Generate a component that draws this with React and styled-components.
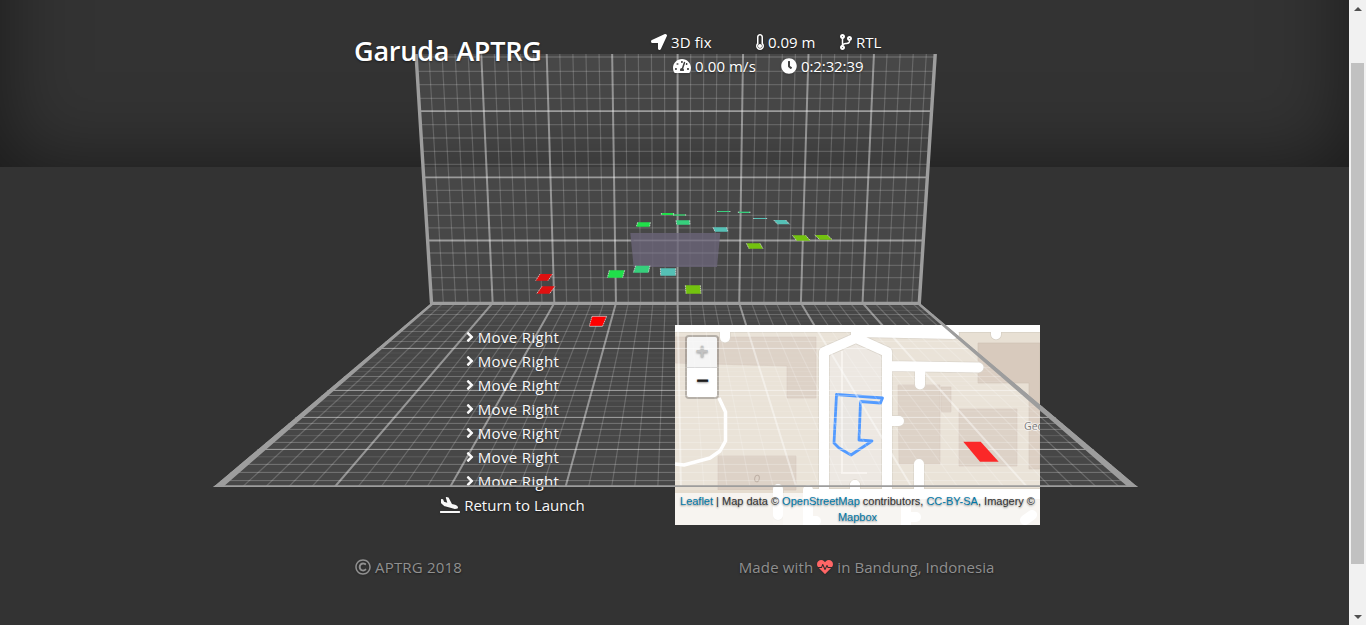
import React from 'react';
import styled, { createGlobalStyle } from 'styled-components';
import {
  FaLocationArrow, FaThermometerEmpty, FaCodeBranch, FaTachometerAlt, FaClock,
  FaAngleRight, FaPlaneArrival, FaRegCopyright, FaHeartbeat,
} from 'react-icons/fa';

const GlobalStyle = createGlobalStyle`
  * { box-sizing: border-box; }
  html, body { margin: 0; background: #333; }
  body {
    overflow: hidden;
    color: #fff;
    font: 15px/24px "Open Sans", "Noto Sans", sans-serif;
    text-shadow: 0 1px 2px rgba(0, 0, 0, 0.5);
  }
`;

const Window = styled.div`
  display: flex;
  width: 1366px;
  height: 625px;
  overflow: hidden;
`;

const Page = styled.main`
  position: relative;
  flex: 1;
  display: flex;
  flex-direction: column;
  background: #333;
`;

const Hero = styled.header`
  position: relative;
  height: 167px;
  padding: 30px 355px 0 354px;
  display: flex;
  justify-content: space-between;
  overflow: hidden;

  &::before {
    content: "";
    position: absolute;
    inset: -120px 0 0;
    box-shadow: inset 0 0 80px rgba(0, 0, 0, 0.5);
  }
`;

const Title = styled.h1`
  position: relative;
  z-index: 2;
  margin: 4px 0 0;
  font-size: 27px;
  line-height: 34px;
  font-weight: 600;
  letter-spacing: -0.2px;
  white-space: nowrap;
`;

const Status = styled.div`
  position: relative;
  z-index: 2;
  width: 232px;
  margin-right: 111px;
`;

const StatusRow = styled.div`
  display: flex;
  padding-left: ${(p) => p.$indent || 0}px;
  gap: ${(p) => p.$gap}px;
`;

const Item = styled.span`
  display: flex;
  align-items: center;
  gap: 4px;
  height: 24px;
  width: ${(p) => (p.$width ? `${p.$width}px` : 'auto')};
  letter-spacing: ${(p) => p.$spacing || 0}px;
  white-space: nowrap;
`;

const Glyph = styled.span`
  display: flex;
  justify-content: center;
  flex: none;
  width: ${(p) => p.$w || 16}px;
  color: ${(p) => p.$color || 'inherit'};
  filter: drop-shadow(0 1px 1px rgba(0, 0, 0, 0.2));

  svg {
    flex: none;
    width: ${(p) => Math.max(p.$w || 16, 16)}px;
    height: 16px;
  }
`;

const Panels = styled.section`
  display: grid;
  grid-template-columns: 365px 365px;
  margin: 158px 0 0 330px;
  height: 200px;
`;

const Commands = styled.div`
  display: flex;
  flex-direction: column;
  align-items: center;
  width: 345px;
  margin-left: 10px;
  color: #f8f8f8;
`;

const MapPanel = styled.div`
  position: relative;
  width: 365px;
  height: 200px;
  margin-left: -20px;
  overflow: hidden;
`;

const ZoomBar = styled.div`
  position: absolute;
  top: 10px;
  left: 10px;
  width: 34px;
  border: 2px solid rgba(0, 0, 0, 0.25);
  border-radius: 4px;
  background-clip: padding-box;
  overflow: hidden;
`;

const ZoomButton = styled.button`
  display: grid;
  place-items: center;
  width: 30px;
  height: ${(p) => (p.$off ? 31 : 29)}px;
  padding: ${(p) => (p.$off ? '3px 0 0' : '1px 0 0 1px')};
  border: 0;
  border-bottom: ${(p) => (p.$off ? '1px solid #ccc' : '0')};
  background: ${(p) => (p.$off ? '#f4f4f4' : '#fff')};
  color: ${(p) => (p.$off ? '#bbb' : '#000')};
  font: bold 22px/28px "Liberation Mono", monospace;
  text-shadow: 0 1px 2px rgba(0, 0, 0, 0.4);
`;

const Attribution = styled.div`
  position: absolute;
  right: 0;
  bottom: 0;
  width: 365px;
  height: 32px;
  padding: 0 3px;
  background: rgba(255, 255, 255, 0.68);
  color: #333;
  font: 11px/16px "Liberation Sans", Arial, sans-serif;
  text-align: center;
  text-shadow: 0 1px 2px rgba(0, 0, 0, 0.45);
`;

const Link = styled.a`
  color: #0078a8;
`;

const Footer = styled.footer`
  display: flex;
  justify-content: space-between;
  margin: 30px 354.5px 0 355px;
  color: #909090;
`;

const SceneLayer = styled.svg`
  position: absolute;
  z-index: 1;
  top: 0;
  left: 0;
  pointer-events: none;
`;

const ScrollTrack = styled.div`
  width: 17px;
  background: #f1f1f1;
  display: flex;
  flex-direction: column;
  align-items: center;
  justify-content: space-between;
  padding: 7px 0 6px;
`;

const Arrow = styled.i`
  border: 4px solid transparent;
  border-top: ${(p) => (p.$up ? '0' : '4px solid #505050')};
  border-bottom: ${(p) => (p.$up ? '4px solid #505050' : '0')};
`;

const Thumb = styled.div`
  width: 13px;
  height: 501px;
  margin-bottom: 0;
  background: #c1c1c1;
`;

const StatusItem = ({ icon: Icon, w, children, ...rest }) => (
  <Item {...rest}>
    <Glyph $w={w}><Icon /></Glyph>
    {children}
  </Item>
);

const steps = Array.from({ length: 39 }, (_, i) => i + 1);
const wallRows = [57, 71.3, 84.7, 98.3, 111.2, 124.7, 138, 151.3, 164.3, 177.3, 190.3, 202.7, 215.3, 227.8, 240.5, 253, 265.3, 277.6, 289.8];
const wallMajor = [111.2, 177.3, 240.5];
const floorRows = [
  [307, 0.06], [310.5, 0.08], [314.5, 0.2], [318, 0.06], [321, 0.05], [325.5, 0.1], [331.5, 0.2], [336.5, 0.06], [341.5, 0.2],
  [348.4, 0.5], [353, 0.06], [358, 0.06], [362.5, 0.06], [367.5, 0.18], [371.5, 0.08], [376.5, 0.24], [381.5, 0.1], [385.5, 0.1],
  [390.4, 0.5], [395.5, 0.25], [401, 0.1], [406.5, 0.12], [411.7, 0.12], [417.4, 0.5], [423.4, 0.25], [429.4, 0.25], [435.6, 0.12],
  [442.4, 0.25], [449.4, 0.5], [456.8, 0.12], [464.4, 0.25], [472.4, 0.25], [480.6, 0.25],
];

const plates = [
  ['60,222 98,222 84,242 47,242', '#e01010'],
  ['66,259 105,259 89,281 50,281', '#e01010'],
  ['216,349 260,349 248,378 208,378', '#ff0000'],
  ['268,211 314,211 308,233 262,233', '#20df4a'],
  ['347,197 390,197 385,218 340,218', '#36cf7c'],
  ['421,205 467,205 467,227 422,227', '#55c0b5'],
  ['496,256 541,256 543,281 498,281', '#73c20f'],
  ['353,67 391,67 389,80 349,80', '#20df4a'],
  ['468,61 509,61 510,74 470,74', '#36cf7c'],
  ['579,82 620,82 624,95 585,95', '#55c0b5'],
  ['761,60 797,60 809,73 773,73', '#55c0b5'],
  ['679,130 720,130 729,146 687,146', '#73c20f'],
  ['817,106 857,106 871,122 830,122', '#73c20f'],
  ['884,105 922,105 937,119 899,119', '#73c20f'],
  ['424,39 461,39 461,45 424,45', '#20df4a'],
  ['461,43 497,43 497,47 461,47', '#36cf6c'],
  ['593,33 630,33 630,36 593,36', '#36cf7c'],
  ['655,35 690,35 690,39 655,39', '#36cf7c'],
  ['701,54 740,54 740,57 701,57', '#55c0b5'],
];

const Scene = () => (
  <SceneLayer width="1349" height="625" viewBox="0 0 1349 625">
    <defs>
      <clipPath id="floor"><path d="M431 303H920L1138 487H213Z" /></clipPath>
    </defs>
    <path d="M415 54H937L920 303H431Z" fill="rgba(255,255,255,.1)" />
    <g stroke="#fff">
      {steps.map((i) => (
        <line key={i} x1={415.8 + i * 13.09} y1="54" x2={431 + i * 12.33} y2="303"
          strokeWidth={i % 5 ? 1.2 : 2} strokeOpacity={i % 5 ? 0.18 : 0.42} />
      ))}
      {wallRows.map((y) => {
        const major = wallMajor.includes(y);
        const inset = ((y - 54) / 249) * 16;
        return <line key={y} x1={416 + inset} x2={936 - inset} y1={y} y2={y}
          strokeWidth={major ? 1.8 : 1.3} strokeOpacity={major ? 0.46 : 0.17} />;
      })}
    </g>
    <path d="M416 54L431.5 303M935.2 54L919.3 303" stroke="#9d9d9d" strokeWidth="3.4" fill="none" />

    <g clipPath="url(#floor)">
      <path d="M431 303H920L1138 487H213Z" fill="rgba(255,255,255,.1)" />
      <g stroke="#fff">
        {steps.map((i) => (
          <line key={i} x1={431 + i * 12.33} y1="303" x2={219.3 + i * 23.08} y2="487"
            strokeWidth={i % 5 ? 1.2 : 2} strokeOpacity={i % 5 ? 0.19 : 0.42} />
        ))}
        {floorRows.map(([y, o]) => (
          <line key={y} x1="213" x2="1138" y1={y} y2={y} strokeWidth="1" strokeOpacity={o} />
        ))}
      </g>
      <path d="M431 303H435L223 487H213ZM920 303H916L1128 487H1138Z" fill="#9d9d9d" />
      <path d="M213 486.3H1138" stroke="#9d9d9d" strokeWidth="2" />
    </g>
    <path d="M430 303.3H921" stroke="#9d9d9d" strokeWidth="3.2" />

    <g transform="translate(520 200) scale(.33333)">
      <path d="M331 99H601L591 201H341Z" fill="#686376" fillOpacity=".85" />
      <path d="M474 99V201M341 121H600M338 159H596" stroke="#fff" strokeOpacity=".07" strokeWidth="4" />
      {plates.map(([points, fill]) => {
        const [a, b, c, d] = points.split(' ');
        return (
          <g key={points}>
            <polygon points={points} fill={fill} />
            <path d={`M${a}L${d}M${b}L${c}`} stroke="#ddd" strokeOpacity=".75" strokeWidth="3" strokeDasharray="5 2" />
          </g>
        );
      })}
      <path d="M216 349H260M208 379H248" stroke="#ddd" strokeOpacity=".8" strokeWidth="2.5" />
    </g>
    <path d="M963.3 441.7H980.7L998.7 461.7H980Z" fill="#fb2828" />
  </SceneLayer>
);

const roads = 'M0 2H365 M50 0V12.5 M149 170V27L181 13 M181 3V13L212 27V170 M181 7L279 9 M212 41L303.5 42.5 M245 42V59.5 M212 96H224 M244 185V139 M103 164V190 M321 0V9.5 M134 169H365 M180 160V172';

const MapArt = () => (
  <svg width="365" height="200" viewBox="0 0 365 200">
    <rect width="365" height="200" fill="#e8e0d4" />
    <path d="M154 30L181 16L208 30V160H154Z" fill="#ebe6df" />
    <path d="M0 12H141V73H112V41L0 38ZM43 131H121V165H43ZM223 60H265V139H224ZM266 62H276V87H266ZM284 84H342V141H284Z" fill="#dacdc1" stroke="#d2c5b8" strokeWidth=".6" />
    <path d="M303 18H365V144H354V58H303Z" fill="#d8cabd" stroke="#cfc0b1" strokeWidth=".6" />
    <path d="M167 26V148H192" stroke="#f6f2ec" strokeWidth="2" fill="none" />
    <path d={roads} stroke="#d6cfc4" strokeWidth="11.4" fill="none" strokeLinecap="round" strokeLinejoin="round" />
    <path d={roads} stroke="#fff" strokeWidth="10" fill="none" strokeLinecap="round" strokeLinejoin="round" />
    <path d="M0 165H98V200H0Z" fill="#e5dccf" />
    <path d="M108 172H128V200H108Z" fill="#f0e9df" />
    <path d="M145 174H225V200H145ZM238 174H359V200H238Z" fill="#e7e0d7" />
    <path d="M133 165V200M139 196H141M231 172V200M231 192H241M350 195L357 190M244 160V168M180 160V168" stroke="#fff" strokeWidth="10" strokeLinecap="round" />
    <path d="M44 73L50.5 87V116L45 126L35 133L9 140L0 139" stroke="#fff" strokeWidth="3.5" fill="none" strokeLinejoin="round" />
    <ellipse cx="82" cy="153.5" rx="2.3" ry="3.3" fill="none" stroke="#b8a99c" strokeWidth="1" transform="rotate(14 82 153.5)" />
    <path d="M161.5 69.5L207.5 73L205.5 78L185.5 76.5L184 115L197 116L176 130L164 123L159 118Z" fill="rgba(51,136,255,.02)" stroke="#3f8fff" strokeWidth="2.8" strokeLinejoin="round" />
    <MapLabel x="349" y="105">Geo</MapLabel>
  </svg>
);

const MapLabel = styled.text`
  fill: #666;
  font: 10.5px "Open Sans", sans-serif;
  stroke: rgba(255, 255, 255, 0.6);
  stroke-width: 2px;
  paint-order: stroke;
  text-shadow: none;
`;

const moves = Array.from({ length: 7 }, (_, i) => i);

export default function App() {
  return (
    <Window>
      <GlobalStyle />
      <Page>
        <Hero>
          <Title>Garuda APTRG</Title>
          <Status>
            <StatusRow $gap={24}>
              <StatusItem icon={FaLocationArrow} $width={81} $spacing={0.1}>3D fix</StatusItem>
              <StatusItem icon={FaThermometerEmpty} w={8} $width={60}>0.09 m</StatusItem>
              <StatusItem icon={FaCodeBranch} w={12}>RTL</StatusItem>
            </StatusRow>
            <StatusRow $gap={24} $indent={22}>
              <StatusItem icon={FaTachometerAlt} w={18} $width={84} $spacing={0.1}>0.00 m/s</StatusItem>
              <StatusItem icon={FaClock} $spacing={-0.1}>0:2:32:39</StatusItem>
            </StatusRow>
          </Status>
        </Hero>
        <Panels>
          <Commands>
            {moves.map((i) => (
              <StatusItem key={i} icon={FaAngleRight} w={8} $spacing={0.34}>Move Right</StatusItem>
            ))}
            <StatusItem icon={FaPlaneArrival} w={20}>Return to Launch</StatusItem>
          </Commands>
          <MapPanel>
            <MapArt />
            <ZoomBar>
              <ZoomButton $off>+</ZoomButton>
              <ZoomButton>−</ZoomButton>
            </ZoomBar>
            <Attribution>
              <Link>Leaflet</Link> | Map data © <Link>OpenStreetMap</Link> contributors, <Link>CC-BY-SA</Link>, Imagery © <Link>Mapbox</Link>
            </Attribution>
          </MapPanel>
        </Panels>
        <Footer>
          <StatusItem icon={FaRegCopyright} $spacing={0.2}>APTRG 2018</StatusItem>
          <Item>
            <Item $spacing={0.15}>Made with</Item>
            <Glyph $color="#ff6666"><FaHeartbeat /></Glyph>
            <Item $spacing={0.05}>in Bandung, Indonesia</Item>
          </Item>
        </Footer>
        <Scene />
      </Page>
      <ScrollTrack>
        <Arrow $up />
        <Thumb />
        <Arrow />
      </ScrollTrack>
    </Window>
  );
}
